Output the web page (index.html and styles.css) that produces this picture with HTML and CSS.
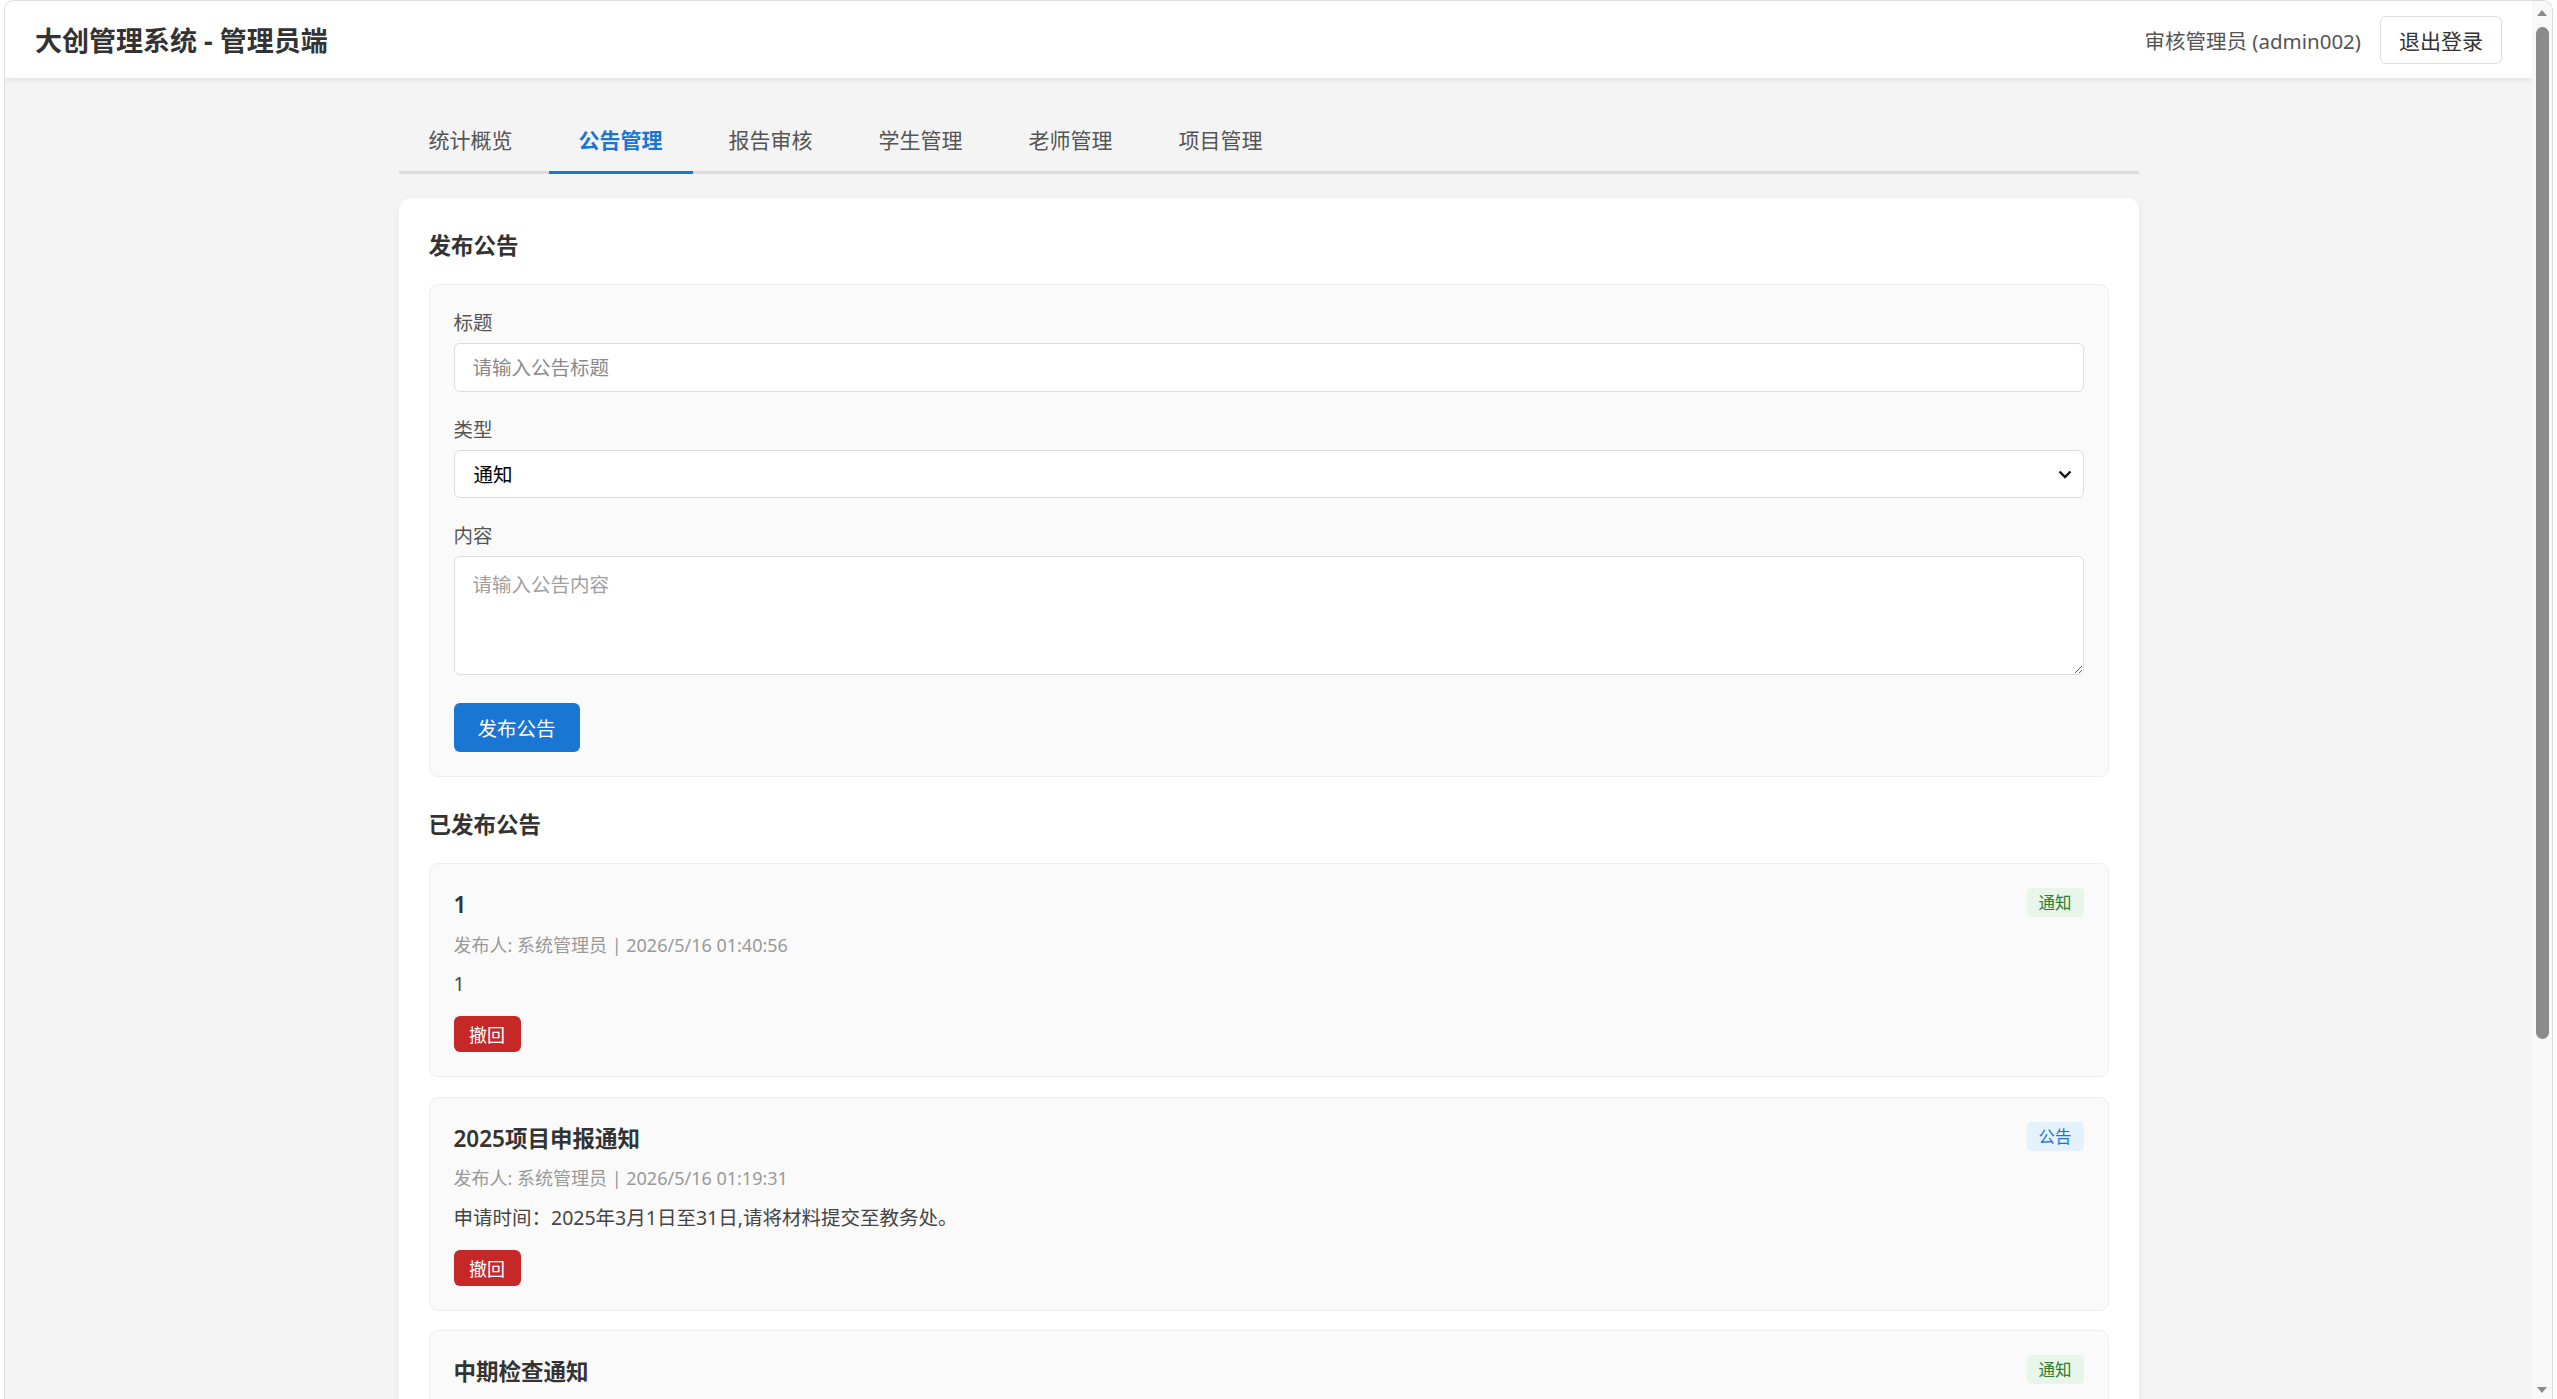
FILE: index.html
```html
<!DOCTYPE html>
<html lang="zh-CN">
<head>
    <meta charset="UTF-8">
    <meta name="viewport" content="width=device-width, initial-scale=1.0">
    <title>大创管理系统 - 管理员端</title>
    <link rel="stylesheet" href="styles.css">
</head>
<body>

    <div class="window">
        <div class="app">
            <header class="topbar">
                <h1 class="brand">大创管理系统 - 管理员端</h1>
                <div class="user-box">
                    <span class="user-name">审核管理员 (admin002)</span>
                    <button class="btn-logout">退出登录</button>
                </div>
            </header>

            <main class="main">
                <nav class="tabs">
                    <a class="tab">统计概览</a>
                    <a class="tab active">公告管理</a>
                    <a class="tab">报告审核</a>
                    <a class="tab">学生管理</a>
                    <a class="tab">老师管理</a>
                    <a class="tab">项目管理</a>
                </nav>

                <section class="card">
                    <h3 class="section-title">发布公告</h3>

                    <div class="form-panel">
                        <div class="form-group">
                            <label>标题</label>
                            <input type="text" class="form-input" placeholder="请输入公告标题">
                        </div>
                        <div class="form-group">
                            <label>类型</label>
                            <div class="select-wrap">
                                <select class="form-input form-select">
                                    <option>通知</option>
                                    <option>公告</option>
                                </select>
                                <svg class="select-arrow" width="14" height="9" viewBox="0 0 14 9">
                                    <path d="M1.5 1.5 L7 7 L12.5 1.5" fill="none" stroke="#111" stroke-width="2.4"/>
                                </svg>
                            </div>
                        </div>
                        <div class="form-group form-group-last">
                            <label>内容</label>
                            <textarea class="form-input form-textarea" placeholder="请输入公告内容"></textarea>
                        </div>
                        <button class="btn-primary">发布公告</button>
                    </div>

                    <h3 class="section-title">已发布公告</h3>

                    <div class="notice">
                        <div class="notice-head">
                            <div class="notice-title">1</div>
                            <span class="tag tag-notice">通知</span>
                        </div>
                        <div class="notice-meta">发布人: 系统管理员 | 2026/5/16 01:40:56</div>
                        <div class="notice-body">1</div>
                        <button class="btn-danger">撤回</button>
                    </div>

                    <div class="notice">
                        <div class="notice-head">
                            <div class="notice-title">2025项目申报通知</div>
                            <span class="tag tag-announce">公告</span>
                        </div>
                        <div class="notice-meta">发布人: 系统管理员 | 2026/5/16 01:19:31</div>
                        <div class="notice-body">申请时间：2025年3月1日至31日,请将材料提交至教务处。</div>
                        <button class="btn-danger">撤回</button>
                    </div>

                    <div class="notice">
                        <div class="notice-head">
                            <div class="notice-title">中期检查通知</div>
                            <span class="tag tag-notice">通知</span>
                        </div>
                        <div class="notice-meta">发布人: 系统管理员 | 2026/5/16 01:19:31</div>
                        <div class="notice-body">请各项目组按时提交中期检查报告。</div>
                        <button class="btn-danger">撤回</button>
                    </div>

                    <div class="notice">
                        <div class="notice-head">
                            <div class="notice-title">结题验收安排</div>
                            <span class="tag tag-announce">公告</span>
                        </div>
                        <div class="notice-meta">发布人: 系统管理员 | 2026/5/16 01:19:31</div>
                        <div class="notice-body">结题验收将于学期末统一进行。</div>
                        <button class="btn-danger">撤回</button>
                    </div>
                </section>
            </main>
        </div>

        <div class="scrollbar">
            <span class="arrow arrow-up"></span>
            <span class="thumb"></span>
            <span class="arrow arrow-down"></span>
        </div>
    </div>

</body>
</html>
```

FILE: styles.css
```css
html, body {
    margin: 0;
    height: 100%;
    overflow: hidden;
    background: #ffffff;
}
body {
    font-family: "Noto Sans", "Noto Sans CJK SC", sans-serif;
    color: #333;
}
.window {
    box-sizing: border-box;
    height: 100vh;
    margin: 0 4px 0 4px;
    display: flex;
    border: 1px solid #dcdcdc;
    border-bottom: none;
    border-radius: 10px 10px 0 0;
    overflow: hidden;
}
.app {
    flex: 1;
    min-width: 0;
    overflow: hidden;
    background: #f4f4f4;
}

/* top bar */
.topbar {
    height: 77px;
    padding: 0 30px;
    display: flex;
    justify-content: space-between;
    align-items: center;
    background: #ffffff;
    box-shadow: 0 2px 6px rgba(0, 0, 0, 0.08);
    position: relative;
}
.brand {
    margin: 0;
    font-size: 27px;
    font-weight: bold;
    color: #333;
}
.user-box {
    display: flex;
    align-items: center;
    gap: 19px;
}
.user-name {
    font-size: 20.5px;
    color: #555;
}
.btn-logout {
    height: 48px;
    padding: 0 18px;
    font-family: inherit;
    font-size: 21px;
    color: #333;
    background: #ffffff;
    border: 1.5px solid #dddddd;
    border-radius: 6px;
    cursor: pointer;
}

/* main */
.main {
    max-width: 1740px;
    margin: 0 auto;
    padding: 30px;
}
.tabs {
    display: flex;
    gap: 6px;
    border-bottom: 3px solid #dddddd;
}
.tab {
    padding: 16.5px 30px;
    font-size: 21px;
    line-height: 30px;
    color: #555;
    border-bottom: 3px solid transparent;
    margin-bottom: -3px;
    cursor: pointer;
}
.tab.active {
    color: #1976d2;
    font-weight: 600;
    border-bottom-color: #1976d2;
}
.card {
    margin-top: 24px;
    padding: 30px;
    background: #ffffff;
    border-radius: 12px;
    box-shadow: 0 2px 8px rgba(0, 0, 0, 0.06);
}
.section-title {
    margin: 0 0 20px;
    font-size: 22.5px;
    line-height: 36px;
    font-weight: bold;
    color: #333;
}

/* form */
.form-panel {
    margin-bottom: 30px;
    padding: 24px;
    background: #fafafa;
    border: 1.5px solid #eeeeee;
    border-radius: 9px;
}
.form-group {
    margin-bottom: 24px;
}
.form-group-last {
    margin-bottom: 28px;
}
.form-group label {
    display: block;
    margin-bottom: 6px;
    font-size: 19.5px;
    line-height: 28px;
    color: #555;
}
.form-input {
    display: block;
    box-sizing: border-box;
    width: 100%;
    height: 49px;
    padding: 0 18px;
    font-family: inherit;
    font-size: 19.5px;
    color: #000;
    background: #ffffff;
    border: 1.5px solid #dddddd;
    border-radius: 6px;
    outline: none;
}
.form-input::placeholder {
    color: #8a8a8a;
}
.select-wrap {
    position: relative;
}
.form-select {
    height: 48px;
    padding: 0 40px 0 19px;
    appearance: none;
    -webkit-appearance: none;
}
.select-arrow {
    position: absolute;
    right: 12px;
    top: 20px;
    pointer-events: none;
}
.form-textarea {
    height: 119px;
    padding: 12px 18px;
    resize: vertical;
}
.form-textarea::placeholder {
    color: #a0a0a0;
}
.btn-primary {
    height: 49px;
    padding: 0 24px;
    font-family: inherit;
    font-size: 19.5px;
    color: #ffffff;
    background: #1976d2;
    border: none;
    border-radius: 6px;
    cursor: pointer;
}

/* notices */
.notice {
    margin-bottom: 19.5px;
    padding: 24px;
    background: #fafafa;
    border: 1.5px solid #eeeeee;
    border-radius: 9px;
}
.notice-head {
    display: flex;
    justify-content: space-between;
    align-items: flex-start;
    margin-bottom: 10.5px;
}
.notice-title {
    font-size: 22.5px;
    line-height: 33px;
    font-weight: 600;
    color: #333;
}
.tag {
    height: 29px;
    padding: 0 12px;
    font-size: 16.5px;
    line-height: 29px;
    border-radius: 4.5px;
}
.tag-notice {
    background: #e8f5e9;
    color: #2e7d32;
}
.tag-announce {
    background: #e3f2fd;
    color: #1976d2;
}
.notice-meta {
    margin-bottom: 10.5px;
    font-size: 18px;
    line-height: 27px;
    color: #999;
}
.notice-body {
    margin-bottom: 18px;
    font-size: 19.5px;
    line-height: 29px;
    color: #444;
}
.btn-danger {
    display: block;
    height: 36px;
    padding: 0 15.5px;
    font-family: inherit;
    font-size: 18px;
    color: #ffffff;
    background: #c62828;
    border: none;
    border-radius: 6px;
    cursor: pointer;
}

/* window scrollbar */
.scrollbar {
    width: 20px;
    display: flex;
    flex-direction: column;
    align-items: center;
    padding: 9px 0 6px;
    box-sizing: border-box;
    background: #f8f8f8;
}
.arrow {
    width: 0;
    height: 0;
    border-left: 5px solid transparent;
    border-right: 5px solid transparent;
}
.arrow-up {
    border-bottom: 6px solid #8b8b8b;
    margin-bottom: 11px;
}
.arrow-down {
    border-top: 6px solid #8b8b8b;
    margin-top: auto;
}
.thumb {
    width: 13px;
    height: 1012px;
    border-radius: 7px;
    background: #8b8b8b;
}
```
